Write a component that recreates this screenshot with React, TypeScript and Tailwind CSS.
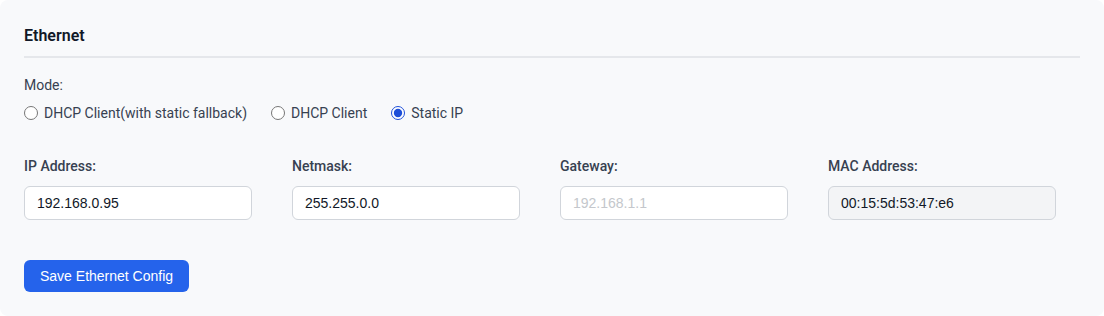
import { useState } from "react";

const label = "block text-sm font-medium text-[#374151] mb-2.5";
const input =
  "w-[228px] h-[34px] rounded-md border border-[#d1d5db] px-3 text-sm text-[#111827] placeholder-[#c4c7cc] outline-none font-['Liberation_Sans',Arial,sans-serif]";

export default function App() {
  const [mode, setMode] = useState("static");

  const modes = [
    { id: "dhcp_fallback", text: "DHCP Client(with static fallback)" },
    { id: "dhcp", text: "DHCP Client" },
    { id: "static", text: "Static IP" },
  ];

  return (
    <div className="min-h-screen bg-white font-['Roboto','Liberation_Sans',sans-serif]">
      <div className="rounded-lg bg-[#f8f9fb] p-6 h-[316px]">
        <h3 className="border-b-2 border-[#e5e7eb] pb-2 text-base font-semibold leading-6 text-[#111827]">
          Ethernet
        </h3>

        <div className="mt-[17px] text-sm leading-5 text-[#374151]">Mode:</div>
        <div className="mt-2 flex items-center gap-6 text-sm leading-5 text-[#374151]">
          {modes.map((m) => (
            <label key={m.id} className="flex items-center gap-1.5">
              <input
                type="radio"
                name="mode"
                checked={mode === m.id}
                onChange={() => setMode(m.id)}
                className="m-0 h-[14px] w-[14px] accent-[#1d4ed8]"
              />
              {m.text}
            </label>
          ))}
        </div>

        <div className="mt-[33px] flex gap-10">
          <div>
            <label className={label}>IP Address:</label>
            <input className={input + " bg-white"} defaultValue="192.168.0.95" />
          </div>
          <div>
            <label className={label}>Netmask:</label>
            <input className={input + " bg-white"} defaultValue="255.255.0.0" />
          </div>
          <div>
            <label className={label}>Gateway:</label>
            <input className={input + " bg-white"} placeholder="192.168.1.1" />
          </div>
          <div>
            <label className={label}>MAC Address:</label>
            <input
              className={input + " bg-[#f3f4f6]"}
              defaultValue="00:15:5d:53:47:e6"
              readOnly
            />
          </div>
        </div>

        <button className="mt-10 h-8 rounded-md bg-[#2563eb] px-4 text-sm text-white font-['Liberation_Sans',Arial,sans-serif]">
          Save Ethernet Config
        </button>
      </div>
    </div>
  );
}
